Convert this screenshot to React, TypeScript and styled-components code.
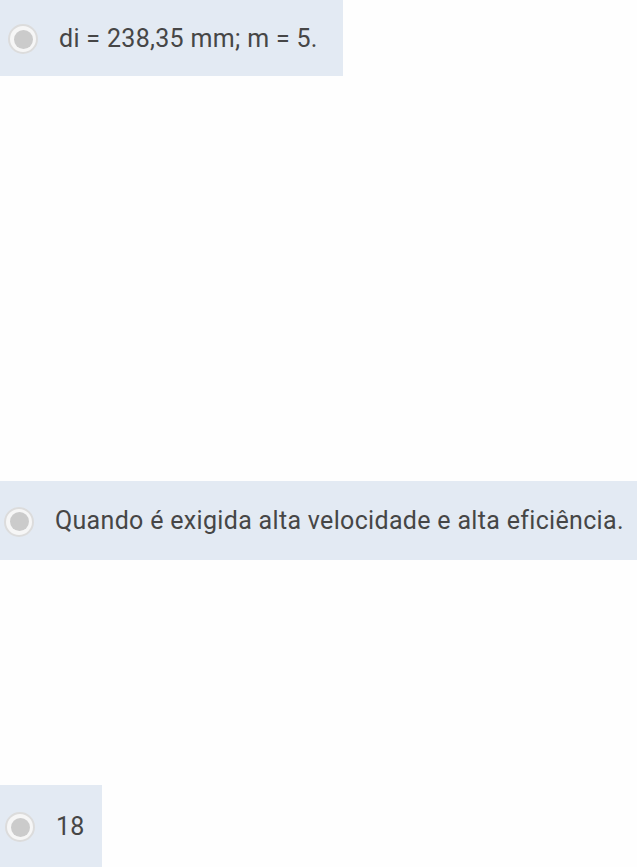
import styled, { createGlobalStyle } from "styled-components";

type Option = {
  label: string;
  width: string;
  height: number;
  padLeft: number;
  top: number;
};

const options: Option[] = [
  { label: "di = 238,35 mm; m = 5.", width: "343px", height: 76, padLeft: 8, top: 0 },
  {
    label: "Quando é exigida alta velocidade e alta eficiência.",
    width: "100%",
    height: 79,
    padLeft: 4,
    top: 405,
  },
  { label: "18", width: "102px", height: 82, padLeft: 5, top: 225 },
];

function App() {
  return (
    <>
      <GlobalStyle />
      <Page>
        {options.map((o) => (
          <Answer
            key={o.label}
            $width={o.width}
            $height={o.height}
            $padLeft={o.padLeft}
            $top={o.top}
          >
            <Radio>
              <Dot />
            </Radio>
            <Label>{o.label}</Label>
          </Answer>
        ))}
      </Page>
    </>
  );
}

export default App;

const GlobalStyle = createGlobalStyle`
  html, body {
    margin: 0;
    padding: 0;
    background: #fefefe;
  }
  body {
    font-family: Roboto, "Liberation Sans", sans-serif;
    overflow: hidden;
  }
`;

const Page = styled.div`
  display: flex;
  flex-direction: column;
  align-items: flex-start;
  width: 637px;
  height: 867px;
  overflow: hidden;
`;

const Answer = styled.div<{
  $width: string;
  $height: number;
  $padLeft: number;
  $top: number;
}>`
  display: flex;
  align-items: center;
  gap: 21px;
  flex-shrink: 0;
  box-sizing: border-box;
  width: ${(p) => p.$width};
  height: ${(p) => p.$height}px;
  margin-top: ${(p) => p.$top}px;
  padding-left: ${(p) => p.$padLeft}px;
  background: #e3eaf3;
  white-space: nowrap;
`;

const Radio = styled.span`
  display: flex;
  align-items: center;
  justify-content: center;
  flex-shrink: 0;
  box-sizing: border-box;
  width: 30px;
  height: 30px;
  border-radius: 50%;
  border: 2px solid #dcdcdc;
  background: #f6f6f6;
  margin-top: 2px;
`;

const Dot = styled.span`
  width: 19px;
  height: 19px;
  border-radius: 50%;
  background: #cbcbcb;
`;

const Label = styled.span`
  font-size: 25px;
  color: #464646;
  letter-spacing: 0.32px;
`;
